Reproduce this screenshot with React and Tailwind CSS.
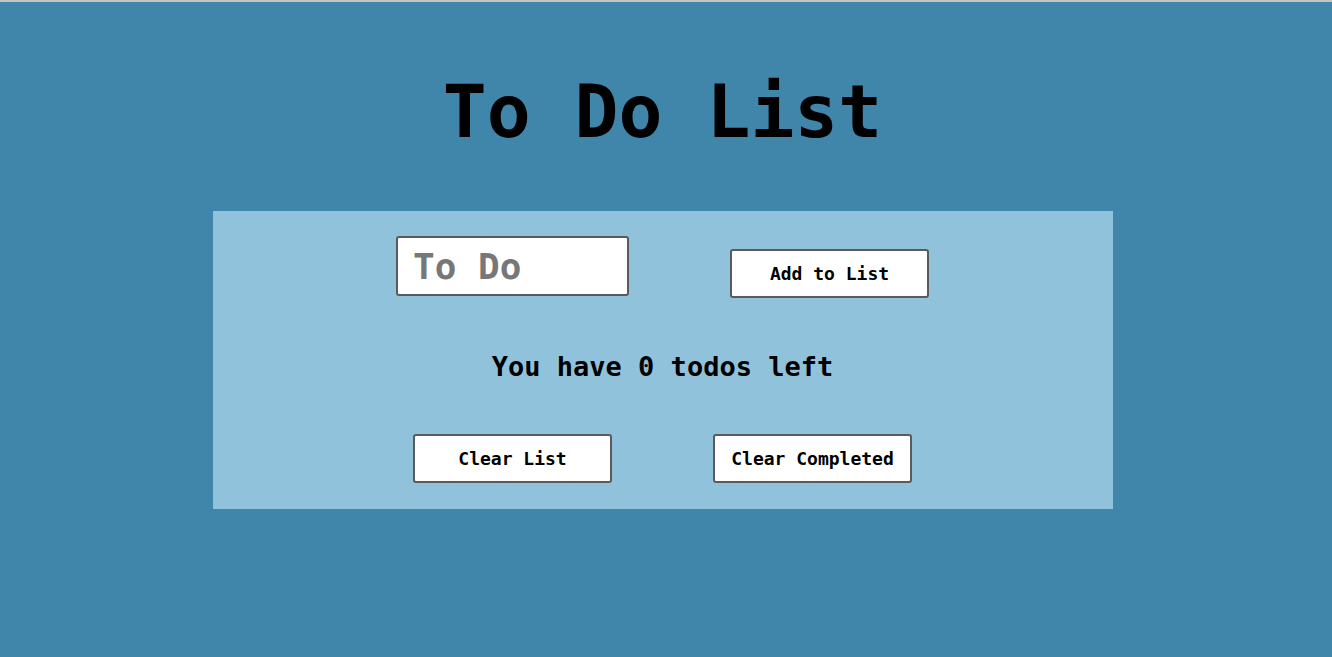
import { useState } from "react";

const mono = "font-['DejaVu_Sans_Mono','Liberation_Mono',monospace]";

function Button({ children, className = "" }) {
  return (
    <button
      className={`w-[199px] h-[49px] bg-white border-2 border-[#5a5a5a] rounded-[3px] text-[18px] font-bold text-black ${mono} ${className}`}
    >
      {children}
    </button>
  );
}

export default function App() {
  const [todo, setTodo] = useState("");

  return (
    <div className={`min-h-[657px] bg-[#4085aa] border-t-2 border-[#c4c4c4] ${mono}`}>
      <div className="flex flex-col items-center pr-[7px]">
        <h1 className="mt-[67px] text-[73px] leading-[85px] font-bold text-black">
          To Do List
        </h1>

        <div className="mt-[57px] w-[900px] bg-[#91c2db] pt-[25px] pb-[26px] flex flex-col items-center">
          <div className="flex items-start gap-[101px]">
            <input
              value={todo}
              onChange={(e) => setTodo(e.target.value)}
              placeholder="To Do"
              className={`w-[233px] h-[60px] bg-white border-2 border-[#5a5a5a] rounded-[3px] px-[15px] text-[36px] font-bold text-black placeholder:text-[#777777] outline-none ${mono}`}
            />
            <Button className="mt-[13px]">Add to List</Button>
          </div>

          <p className="mt-[53px] text-[27px] leading-[32px] font-bold text-black">
            You have 0 todos left
          </p>

          <div className="mt-[51px] flex gap-[101px]">
            <Button>Clear List</Button>
            <Button>Clear Completed</Button>
          </div>
        </div>
      </div>
    </div>
  );
}
